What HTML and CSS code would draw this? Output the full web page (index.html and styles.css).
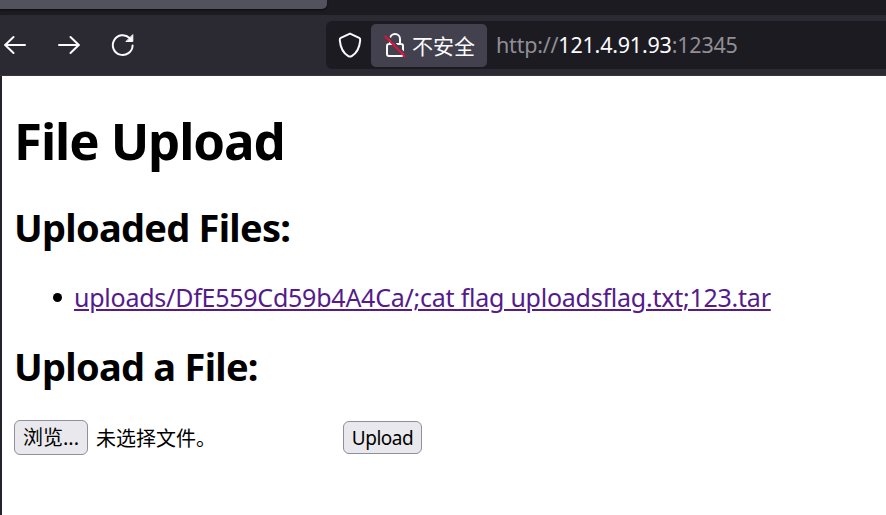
FILE: index.html
```html
<!DOCTYPE html>
<html lang="zh-CN">
<head>
<meta charset="utf-8">
<title>File Upload</title>
<link rel="stylesheet" href="styles.css">
</head>
<body>
<div class="tabs"><div class="tab"></div></div>
<nav class="toolbar">
  <div class="nav-icons">
    <svg width="26" height="26" viewBox="0 0 26 26"><path d="M24 13H4M12.500 5L4.200 13l8.300 8"/></svg>
    <svg width="26" height="26" viewBox="0 0 26 26"><path d="M4 13h20M15.500 5l8.300 8-8.300 8"/></svg>
    <svg width="26" height="26" viewBox="0 0 26 26"><path d="M23.600 13.500A9.900 9.900 0 1 1 20.600 6"/><path class="solid" d="M23.800 3v6.500h-6.500z"/></svg>
  </div>
  <div class="address">
    <svg class="shield" width="26" height="28" viewBox="0 0 26 28"><path d="M13 2.600l9.200 4.200c1 .5 1.200 1 1 2.500-.6 6.700-3.200 12.600-8.500 15.800-1.200.7-2.200.7-3.400 0C6 21.900 3.400 16 2.800 9.300c-.2-1.500 0-2 1-2.500z"/></svg>
    <div class="security">
      <svg width="24" height="28" viewBox="0 0 24 28"><path d="M7 13V8a5 5 0 0 1 10 0V13M6 13h12a2 2 0 0 1 2 2v8.100a2 2 0 0 1-2 2H6a2 2 0 0 1-2-2V15a2 2 0 0 1 2-2z"/><path class="gap" d="M3 3.500L22 23"/><path class="slash" d="M2.300 5.500L21.500 25"/></svg>
      <span>不安全</span>
    </div>
    <div class="url">http://<b>121.4.91.93</b>:12345</div>
  </div>
</nav>
<main>
  <h1>File Upload</h1>
  <h2 class="files-title">Uploaded Files:</h2>
  <ul><li><a href="#">uploads/DfE559Cd59b4A4Ca/;cat flag uploadsflag.txt;123.tar</a></li></ul>
  <h2 class="form-title">Upload a File:</h2>
  <form>
    <button type="button" class="browse">浏览...</button>
    <span class="status">未选择文件。</span>
    <button type="button" class="upload">Upload</button>
  </form>
</main>
</body>
</html>
```
FILE: styles.css
```css
* { box-sizing: border-box; }
body {
  margin: 0;
  height: 515px;
  overflow: hidden;
  background: #fff;
  color: #000;
  font-family: "Noto Sans", "Noto Sans CJK SC", sans-serif;
}
.tabs { height: 15px; background: #1c1b22; }
.tab { width: 327px; height: 9px; background: #52525e; border-radius: 0 0 5px 0; box-shadow: 0 1px 2px #0c0c0d; }
.toolbar {
  height: 61px;
  display: flex;
  background: #2b2a33;
  border-bottom: 1px solid #38343f;
}
.nav-icons { width: 326px; display: flex; gap: 28px; padding: 17px 0 0 1px; }
svg { display: block; flex: none; fill: none; stroke: #fbfbfe; stroke-width: 2; stroke-linecap: round; stroke-linejoin: round; }
.solid { fill: #fbfbfe; stroke-width: 1; }
.gap { stroke: #42414d; }
.slash { stroke: #e5103f; }
.address {
  flex: 1;
  height: 48px;
  margin-top: 6px;
  display: flex;
  align-items: center;
  background: #1c1b22;
  border-radius: 6px 0 0 6px;
}
.shield { margin: 0 8px 0 11px; }
.security {
  width: 116px;
  height: 43px;
  display: flex;
  align-items: center;
  gap: 5px;
  padding-left: 12px;
  background: #42414d;
  border-radius: 5px;
  color: #fbfbfe;
  font: 21px/42px "Noto Sans CJK SC", sans-serif;
  white-space: nowrap;
}
.url { margin-left: 9px; color: #8f8f94; font-size: 21.500px; line-height: 48px; letter-spacing: -.21px; white-space: nowrap; }
.url b { color: #fbfbfe; font-weight: 400; }
main { height: 439px; padding: 34px 0 0 12px; border-left: 2px solid #252229; }
h1, h2 { margin: 0; font-weight: 700; white-space: nowrap; }
h1 { font-size: 51px; line-height: 60px; letter-spacing: -1.1px; }
h2 { font-size: 38px; line-height: 50px; letter-spacing: -.73px; }
.files-title { margin-top: 32px; }
ul { margin: 28px 0 0; padding-left: 39px; list-style: none; font-size: 25px; line-height: 34px; white-space: nowrap; }
li { display: flex; align-items: center; }
li::before { content: ""; width: 9px; height: 9px; margin-right: 12px; border-radius: 50%; background: #000; }
a { color: #551a8b; letter-spacing: -.24px; text-decoration-thickness: 2px; text-underline-offset: 2px; }
.form-title { margin-top: 27px; }
form { display: flex; align-items: center; height: 35px; margin-top: 29px; }
button {
  padding: 0;
  background: #e9e9ed;
  border: 1px solid #8f8f9d;
  border-radius: 6px;
  color: #000;
  font-family: "Noto Sans", "Noto Sans CJK SC", sans-serif;
  font-size: 20px;
  line-height: 30px;
  white-space: nowrap;
}
.browse { width: 74px; height: 35px; }
.status { width: 247px; margin-left: 8px; font: 20px/34px "Noto Sans CJK SC", sans-serif; }
.upload { width: 79px; height: 33px; font-size: 19px; letter-spacing: -.5px; }
```
